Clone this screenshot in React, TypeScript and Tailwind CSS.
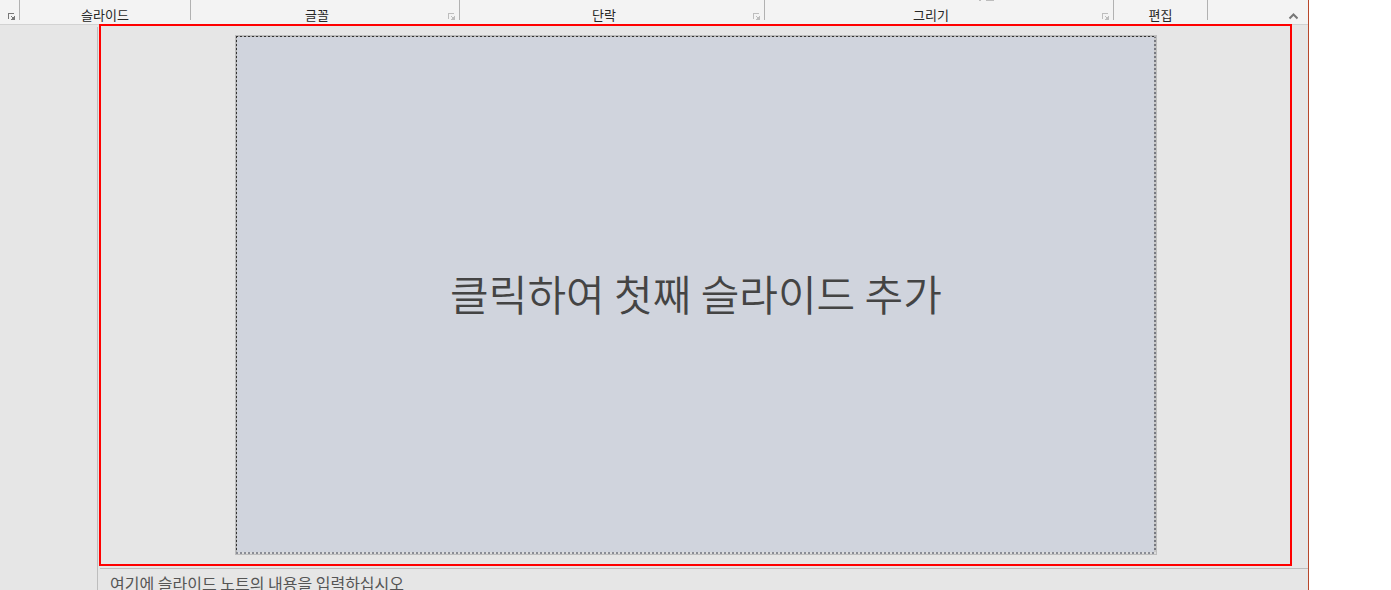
import type { ReactNode } from "react";

function Launcher({ label, dim = true }: { label: string; dim?: boolean }) {
  return (
    <button
      type="button"
      aria-label={label}
      className={dim ? "mt-3 mr-[3px] text-[#bdbdbd]" : "mt-3 mr-[3px] text-[#777777]"}
    >
      <svg width="8" height="8" viewBox="0 0 8 8" fill="currentColor" shapeRendering="crispEdges" className="block">
        <path d="M0 1h6v1H1v5H0zM3 4h1v1H3zM6 4h1v4H3V7h1V6h1V5h1zM4 5h1v1H4z" />
      </svg>
    </button>
  );
}

function Group({ name, className, children }: { name?: string; className: string; children?: ReactNode }) {
  return (
    <div className={`flex h-5 shrink-0 border-r border-[#b1b1b1] ${className}`}>
      <span className="flex-1 pt-[7px] text-center leading-4 whitespace-nowrap">{name}</span>
      {children && <span className="flex w-4 shrink-0 justify-end">{children}</span>}
    </div>
  );
}

export default function App() {
  return (
    <div className="min-h-screen bg-white pr-[82px] font-['Noto_Sans_CJK_KR',sans-serif]">
      <div className="flex h-screen flex-col overflow-hidden border-r border-[#b7472a] bg-[#e6e6e6]">
        <header className="flex h-[25px] shrink-0 border-b border-[#d2d2d2] bg-[#f3f3f3] text-[13px] text-[#262626]">
          <Group className="w-5">
            <Launcher label="클립보드 옵션" dim={false} />
          </Group>
          <Group name="슬라이드" className="w-[171px]" />
          <Group name="글꼴" className="w-[269px]">
            <Launcher label="글꼴 옵션" />
          </Group>
          <Group name="단락" className="w-[305px]">
            <Launcher label="단락 옵션" />
          </Group>
          <div className="relative shrink-0">
            <Group name="그리기" className="w-[349px]">
              <Launcher label="그리기 옵션" />
            </Group>
            <svg
              width="16"
              height="1"
              viewBox="0 0 16 1"
              fill="#bdbdbd"
              aria-hidden="true"
              className="absolute top-0 left-[213px]"
            >
              <path d="M1 0h2v1H1zM8 0h8v1H8z" />
            </svg>
          </div>
          <Group name="편집" className="w-[94px]" />
          <button type="button" aria-label="리본 메뉴 축소" className="mt-3 mr-2.5 ml-auto h-2 text-[#777777]">
            <svg width="10" height="8" viewBox="0 0 10 8" fill="none" stroke="currentColor" strokeWidth="2" className="block">
              <path d="M1.5 6.5 5.5 2.5 9.5 6.5" />
            </svg>
          </button>
        </header>

        <div className="flex min-h-0 flex-1">
          <aside className="mt-0.5 w-[98px] shrink-0 border-r border-[#bdbdbd]" />
          <main className="flex min-w-0 flex-1 flex-col">
            <section className="-mt-px mr-4 ml-px flex h-[542px] shrink-0 border-2 border-[#ff0000] pt-[9px] pr-[133px] pb-[9px] pl-[134px]">
              <button type="button" className="flex-1 border border-[#bdbdbd] bg-[#d0d4dd]">
                <span className="flex h-full w-full items-center justify-center bg-[repeating-linear-gradient(90deg,#333_0_2px,#b4b4b4_2px_4px),repeating-linear-gradient(90deg,#8a8d96_0_2px,#dcdcdc_2px_4px),repeating-linear-gradient(#333_0_2px,#b4b4b4_2px_4px),repeating-linear-gradient(#777981_0_2px,#c8c8c8_2px_4px)] bg-[size:100%_1px,100%_2px,1px_100%,2px_100%] bg-[position:top,bottom,left,right] bg-no-repeat pb-1 text-[42px] leading-none font-[350] text-[#444444]">
                  클릭하여 첫째 슬라이드 추가
                </span>
              </button>
            </section>
            <label className="mt-0.5 ml-0.5 block border-t border-[#bdbdbd]">
              <input
                aria-label="슬라이드 노트"
                placeholder="여기에 슬라이드 노트의 내용을 입력하십시오"
                className="block h-7 w-full bg-transparent px-2.5 text-base text-[#555555] outline-none placeholder:text-[#555555]"
              />
            </label>
          </main>
        </div>
      </div>
    </div>
  );
}
